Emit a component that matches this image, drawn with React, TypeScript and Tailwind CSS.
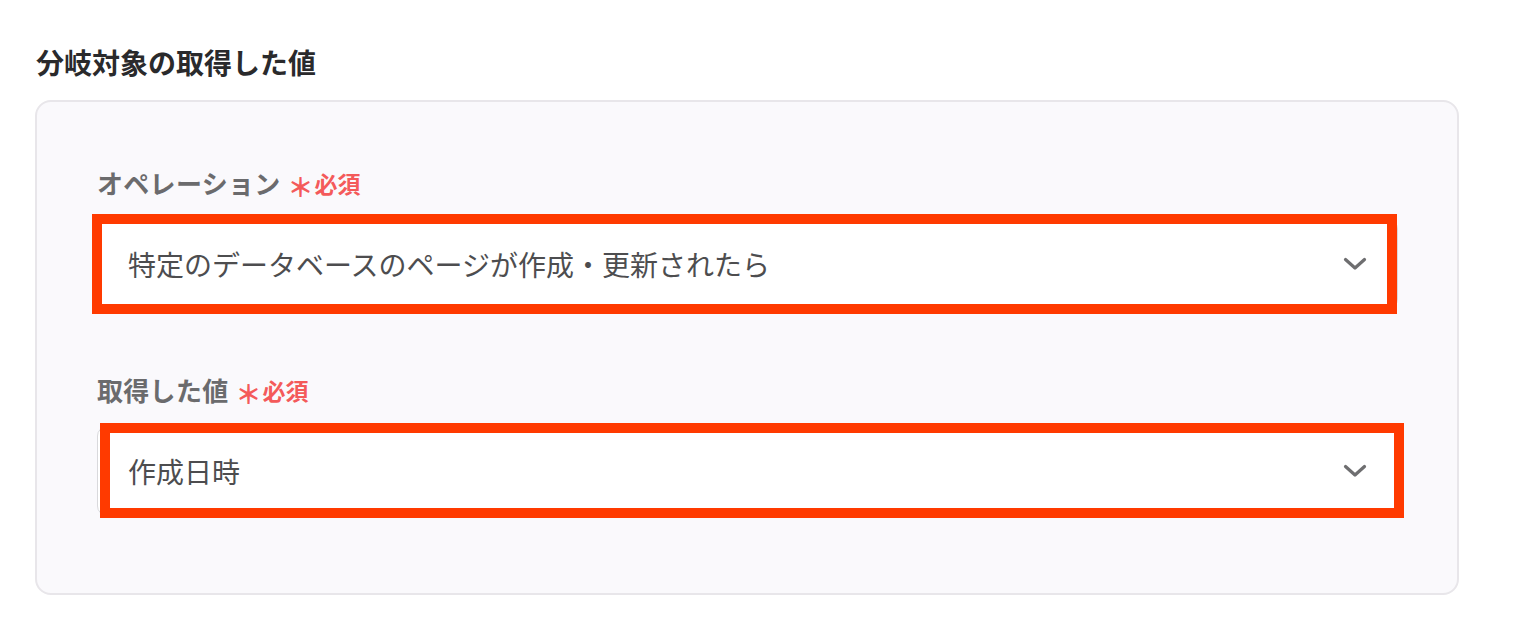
import React from "react";

const font = { fontFamily: '"Noto Sans CJK JP", "Noto Sans", sans-serif' };

function Chevron() {
  return (
    <svg width="24" height="14" viewBox="0 0 24 14" fill="none" className="shrink-0">
      <path d="M2.5 2.5 L12 11 L21.5 2.5" stroke="#6e6e70" strokeWidth="3.2" strokeLinecap="round" strokeLinejoin="round" />
    </svg>
  );
}

function Label({ text }: { text: string }) {
  return (
    <div className="flex items-center h-[36px]">
      <span className="text-[26px] leading-[36px] font-bold text-[#6b6b6d] tracking-[0.3px]">{text}</span>
      <span className="ml-[7px] text-[26px] leading-[36px] font-bold text-[#f45a5a] mt-[6px]">＊</span>
      <span className="ml-[1px] text-[23px] leading-[36px] font-bold text-[#f45a5a]">必須</span>
    </div>
  );
}

function Select({ value, highlight }: { value: string; highlight: "a" | "b" }) {
  return (
    <div className="relative">
      <div className="h-[90px] bg-white border border-[#d9d9dc] rounded-[10px] flex items-center justify-between pl-[30px] pr-[30px]">
        <span className="text-[28px] text-[#4d4d4f] leading-none">{value}</span>
        <Chevron />
      </div>
      {highlight === "a" ? (
        <div className="absolute left-[-5px] top-[-5px] w-[1305px] h-[100px] border-[10px] border-[#ff3a00] pointer-events-none" />
      ) : (
        <div className="absolute left-[3px] top-[-3px] w-[1304px] h-[95px] border-[10px] border-[#ff3a00] pointer-events-none" />
      )}
    </div>
  );
}

export default function App() {
  return (
    <div className="w-[1531px] h-[632px] bg-white pl-[35px] pt-[42px]" style={font}>
      <div className="text-[28px] leading-[40px] font-bold text-[#2a2a2c] pl-[1px]">分岐対象の取得した値</div>
      <div className="mt-[18px] w-[1424px] h-[495px] rounded-[16px] border-2 border-[#e8e6ea] bg-[#faf9fc] pl-[60px] pr-[59px] pt-[63px]">
        <Label text="オペレーション" />
        <div className="mt-[18px]">
          <Select value="特定のデータベースのページが作成・更新されたら" highlight="a" />
        </div>
        <div className="mt-[63px]">
          <Label text="取得した値" />
        </div>
        <div className="mt-[18px]">
          <Select value="作成日時" highlight="b" />
        </div>
      </div>
    </div>
  );
}
